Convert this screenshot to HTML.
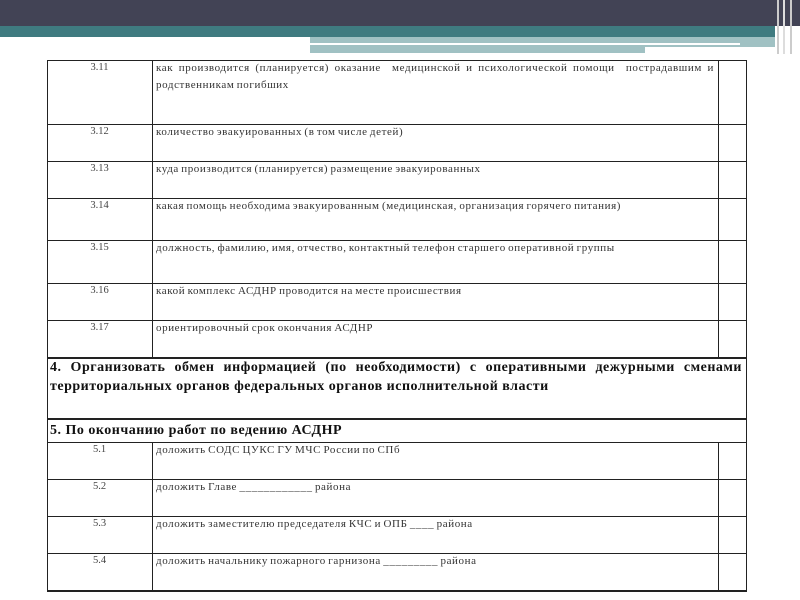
<!DOCTYPE html>
<html><head><meta charset="utf-8"><style>
body{margin:0;width:800px;height:600px;background:#fff;position:relative;overflow:hidden;font-family:"Liberation Serif","Noto Serif CJK SC",serif;}
.a{position:absolute;}
.h{position:absolute;left:47px;width:699px;height:1px;background:#222;}
.v{position:absolute;width:1px;background:#222;}
.n{position:absolute;left:47px;width:105px;text-align:center;font-size:10.5px;color:#444;}
.t{position:absolute;left:156px;width:558px;font-size:11px;letter-spacing:0.6px;word-spacing:-1px;color:#333;line-height:17px;}
.b{position:absolute;left:50px;width:692px;font-size:14px;letter-spacing:0.5px;font-weight:bold;color:#111;line-height:19px;}
</style></head><body>
<div class="a" style="left:0;top:0;width:800px;height:26px;background:#424355"></div>
<div class="a" style="left:0;top:26px;width:775px;height:11px;background:#3f7b80"></div>
<div class="a" style="left:310px;top:37px;width:465px;height:16px;background:#a0c1c3"></div>
<div class="a" style="left:310px;top:43px;width:430px;height:2px;background:#fff"></div>
<div class="a" style="left:645px;top:47px;width:130px;height:6px;background:#fff"></div>
<div class="a" style="left:777px;top:0;width:2px;height:54px;background:#ccc"></div>
<div class="a" style="left:783px;top:0;width:2px;height:54px;background:#ddd"></div>
<div class="a" style="left:790px;top:0;width:2px;height:54px;background:#ccc"></div>

<div class="h" style="top:60px"></div>
<div class="h" style="top:124px"></div>
<div class="h" style="top:161px"></div>
<div class="h" style="top:198px"></div>
<div class="h" style="top:240px"></div>
<div class="h" style="top:283px"></div>
<div class="h" style="top:320px"></div>
<div class="h" style="top:357px;height:2px"></div>
<div class="h" style="top:418px;height:2px"></div>
<div class="h" style="top:442px"></div>
<div class="h" style="top:479px"></div>
<div class="h" style="top:516px"></div>
<div class="h" style="top:553px"></div>
<div class="h" style="top:590px;height:2px"></div>
<div class="v" style="left:47px;top:60px;height:532px"></div>
<div class="v" style="left:746px;top:60px;height:532px"></div>
<div class="v" style="left:152px;top:60px;height:297px"></div>
<div class="v" style="left:718px;top:60px;height:297px"></div>
<div class="v" style="left:152px;top:442px;height:148px"></div>
<div class="v" style="left:718px;top:442px;height:148px"></div>

<div class="n" style="top:62px">3.11</div><div class="t" style="top:60px;text-align:justify;text-align-last:left">как производится (планируется) оказание &nbsp;медицинской и психологической помощи &nbsp;пострадавшим и родственникам погибших</div>
<div class="n" style="top:126px">3.12</div><div class="t" style="top:124px">количество эвакуированных (в том числе детей)</div>
<div class="n" style="top:163px">3.13</div><div class="t" style="top:161px">куда производится (планируется) размещение эвакуированных</div>
<div class="n" style="top:200px">3.14</div><div class="t" style="top:198px">какая помощь необходима эвакуированным (медицинская, организация горячего питания)</div>
<div class="n" style="top:242px">3.15</div><div class="t" style="top:240px">должность, фамилию, имя, отчество, контактный телефон старшего оперативной группы</div>
<div class="n" style="top:285px">3.16</div><div class="t" style="top:283px">какой комплекс АСДНР проводится на месте происшествия</div>
<div class="n" style="top:322px">3.17</div><div class="t" style="top:320px">ориентировочный срок окончания АСДНР</div>
<div class="b" style="top:358px;text-align:justify;text-align-last:left">4. Организовать обмен информацией (по необходимости) с оперативными дежурными сменами территориальных органов федеральных органов исполнительной власти</div>
<div class="b" style="top:421px">5. По окончанию работ по ведению АСДНР</div>
<div class="n" style="top:444px">5.1</div><div class="t" style="top:442px">доложить СОДС ЦУКС ГУ МЧС России по СПб</div>
<div class="n" style="top:481px">5.2</div><div class="t" style="top:479px">доложить Главе ____________ района</div>
<div class="n" style="top:518px">5.3</div><div class="t" style="top:516px">доложить заместителю председателя КЧС и ОПБ ____ района</div>
<div class="n" style="top:555px">5.4</div><div class="t" style="top:553px">доложить начальнику пожарного гарнизона _________ района</div>
</body></html>
